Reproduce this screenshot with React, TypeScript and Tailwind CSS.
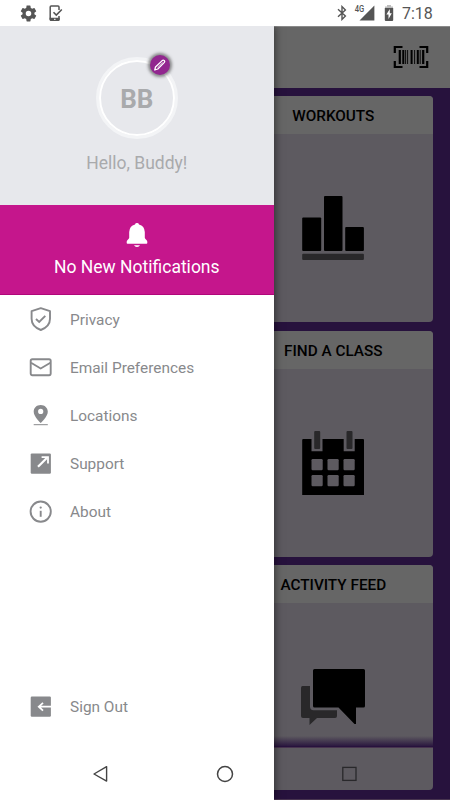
import type { ReactNode } from 'react'

interface MenuItemProps {
  icon: ReactNode
  label: string
}

interface TileProps {
  title: string
  children: ReactNode
}

function StatusBar() {
  return (
    <header className="z-20 flex h-[26px] w-full shrink-0 items-center bg-white pl-[19px] pr-[17px] text-[#555]">
      <svg className="h-[19px] w-[19px]" viewBox="0 0 24 24" fill="currentColor">
        <path d="M19.43 12.98c.04-.32.07-.64.07-.98s-.03-.66-.07-.98l2.11-1.65c.19-.15.24-.42.12-.64l-2-3.46c-.12-.22-.39-.3-.61-.22l-2.49 1c-.52-.4-1.08-.73-1.69-.98l-.38-2.65A.49.49 0 0 0 14 2h-4c-.25 0-.46.18-.49.42l-.38 2.65c-.61.25-1.17.59-1.69.98l-2.49-1c-.23-.09-.49 0-.61.22l-2 3.46c-.13.22-.07.49.12.64l2.11 1.65c-.04.32-.07.65-.07.98s.03.66.07.98l-2.11 1.65c-.19.15-.24.42-.12.64l2 3.46c.12.22.39.3.61.22l2.49-1c.52.4 1.08.73 1.69.98l.38 2.65c.03.24.24.42.49.42h4c.25 0 .46-.18.49-.42l.38-2.65c.61-.25 1.17-.59 1.69-.98l2.49 1c.23.09.49 0 .61-.22l2-3.46c.12-.22.07-.49-.12-.64zM12 15.5a3.5 3.5 0 1 1 0-7 3.5 3.5 0 0 1 0 7" />
      </svg>
      <svg className="ml-[10px] h-[18px] w-[16px]" viewBox="0 0 16 18" fill="none" stroke="currentColor">
        <path d="M11 6V3Q11 2 10 2H3.2Q2.2 2 2.2 3V15Q2.2 16 3.2 16H10Q11 16 11 15V12" strokeWidth="1.5" />
        <path d="M1.6 13.8H11.7V15.5Q11.7 17 10.4 17H3Q1.6 17 1.6 15.5Z" fill="currentColor" stroke="none" />
        <path d="M5.5 8.2L8.3 11L13.8 5.5" strokeWidth="1.6" />
        <path d="M6 15.3H7.6" stroke="#fff" />
      </svg>

      <div className="flex-1" />

      <svg className="h-[16px] w-[12px]" viewBox="0 0 12 16" fill="none" stroke="currentColor" strokeWidth="1.4">
        <path d="M2 4.2L9.4 11L6 14.4V1.6L9.4 5L2 11.8" />
      </svg>
      <svg className="ml-[6px] h-[18px] w-[22px]" viewBox="0 0 22 18" fill="currentColor">
        <path d="M20.4 1.5V16.4H5.5Z" />
        <text x="0.8" y="8" fontFamily="Roboto, sans-serif" fontSize="8.5" fontWeight="500" textLength="9.5" lengthAdjust="spacingAndGlyphs">
          4G
        </text>
      </svg>
      <svg className="ml-[8px] h-[16px] w-[10px]" viewBox="0 0 10 16">
        <path d="M3 0H7V1.5H9V6H1V1.5H3Z" fill="#bdbdbd" />
        <path d="M.8 3H9.2V15Q9.2 16 8.2 16H1.8Q.8 16 .8 15Z" fill="#555" />
        <path d="M5.8 4L2.4 9.4H4.5V14L7.8 8.2H5.8Z" fill="#fff" />
      </svg>
      <span className="ml-[8px] mt-[2px] w-[31px] whitespace-nowrap text-[16px]">7:18</span>
    </header>
  )
}

function Profile() {
  return (
    <section className="flex h-[179px] flex-col items-center bg-[#e7e8ec] pt-[31px]">
      <div className="relative flex h-[82px] w-[82px] items-center justify-center rounded-full border-[3px] border-[#f3f4f6]">
        <div className="flex h-[76px] w-[76px] shrink-0 items-center justify-center rounded-full border-2 border-white pt-[2px] text-[26px] font-bold text-[#a9aaac]">
          BB
        </div>
        {/* Edit badge */}
        <div className="absolute -top-[5px] right-[5px] flex h-5 w-5 items-center justify-center rounded-full bg-[#92278f] shadow-[0_0_3px_2px_rgba(60,60,60,0.55)]">
          <svg className="h-[14px] w-[14px]" viewBox="0 0 14 14" fill="none" stroke="#fff" strokeWidth="1.3" strokeLinejoin="round">
            <path d="M1.8 12L2.5 9L9.2 2.6Q10.2 1.8 11.2 2.5Q12.2 3.4 11.4 4.4L4.8 11Z" />
            <path d="M4.5 9.3L9.6 4.4" strokeWidth=".6" />
          </svg>
        </div>
      </div>
      <p className="mt-[12px] text-[17.5px] leading-6 text-[#a9aaac]">Hello, Buddy!</p>
    </section>
  )
}

function Notifications() {
  return (
    <section className="flex h-[90px] flex-col items-center border-b border-[#b0067a] bg-[#c5168c] pt-[18px] text-white">
      <svg className="h-[25px] w-[22px]" viewBox="0 0 22 25" fill="currentColor">
        <path d="M11 0Q12.7 0 13 1.4Q18.5 2.8 18.8 9V14.8Q19 16 20.2 16.8Q21.3 17.6 21.3 18.8V20Q21.3 20.8 20.5 20.8H1.5Q.7 20.8.7 20V18.8Q.7 17.6 1.8 16.8Q3 16 3.2 14.8V9Q3.5 2.8 9 1.4Q9.3 0 11 0Z" />
        <path d="M8 22.2H14Q13.2 24 11 24Q8.8 24 8 22.2Z" />
      </svg>
      <p className="mt-[7px] text-[17.5px] leading-6">No New Notifications</p>
    </section>
  )
}

function MenuItem({ icon, label }: MenuItemProps) {
  return (
    <li className="flex h-12 items-center gap-[17px] pl-[29px] text-[15.4px] text-[#88898c]">
      <svg className="h-6 w-6 shrink-0 overflow-visible" viewBox="0 0 24 24" fill="none" stroke="currentColor" strokeWidth="1.9">
        {icon}
      </svg>
      <span className="pt-[2px]">{label}</span>
    </li>
  )
}

const menu: MenuItemProps[] = [
  {
    label: 'Privacy',
    icon: (
      <>
        <path d="M11.8 .2L21 3.2V10.8Q21 18.6 11.8 22Q2.6 18.6 2.6 10.8V3.2Z" strokeLinejoin="round" />
        <path d="M7 11L10.2 14L16.3 7.8" />
      </>
    ),
  },
  {
    label: 'Email Preferences',
    icon: (
      <>
        <rect x="1.7" y="3.2" width="20" height="16" rx="1.6" />
        <path d="M2 6.8L11.7 12.5L21.4 6.8" />
      </>
    ),
  },
  {
    label: 'Locations',
    icon: (
      <>
        <path
          d="M11.7 1C7.6 1 4.7 3.9 4.7 7.8C4.7 12.8 11.7 19 11.7 19S18.8 12.8 18.8 7.8C18.8 3.9 15.8 1 11.7 1ZM11.7 10A2.6 2.6 0 1 1 11.7 4.8A2.6 2.6 0 0 1 11.7 10Z"
          fill="currentColor"
          stroke="none"
        />
        <path d="M4.7 20.7H18.8" strokeWidth="1" />
      </>
    ),
  },
  {
    label: 'Support',
    icon: (
      <>
        <rect x="1.7" y="1.4" width="20.2" height="20.4" rx="1.2" fill="currentColor" stroke="none" />
        <path d="M9 14.8L17.8 6" stroke="#fff" strokeWidth="2.2" />
        <path d="M12.6 5.2H19V11.4" stroke="#fff" strokeWidth="1.8" />
      </>
    ),
  },
  {
    label: 'About',
    icon: (
      <>
        <circle cx="11.7" cy="11.6" r="10.1" />
        <circle cx="11.7" cy="7.6" r="1.15" fill="currentColor" stroke="none" />
        <path d="M11.7 10.8V16.8" strokeWidth="1.9" />
      </>
    ),
  },
]

const signOut: MenuItemProps = {
  label: 'Sign Out',
  icon: (
    <>
      <rect x="1.7" y="1.6" width="20.2" height="20.2" rx="1.2" fill="currentColor" stroke="none" />
      <path d="M22 11.7H9.6M14 7.8L9.8 11.7L14 15.6" stroke="#fff" strokeWidth="1.8" />
    </>
  ),
}

function Drawer() {
  return (
    <aside className="z-10 flex w-[273.6px] shrink-0 flex-col bg-white shadow-[1px_0_8px_rgba(0,0,0,0.5)]">
      <Profile />
      <Notifications />
      <ul className="mt-px">
        {menu.map((item) => (
          <MenuItem key={item.label} {...item} />
        ))}
      </ul>
      <ul className="mt-auto pb-[69px]">
        <MenuItem {...signOut} />
      </ul>
    </aside>
  )
}

function Tile({ title, children }: TileProps) {
  return (
    <article className="h-[226px] shrink-0 overflow-hidden rounded-r-[4px] bg-[#5d5a60]">
      <h2 className="flex h-[38px] items-center justify-center bg-[#666] pr-10 text-[15.3px] font-medium text-black">
        <span className="mt-[3px] whitespace-nowrap">{title}</span>
      </h2>
      <svg className="ml-[26.4px] mt-[58px] h-[70px] w-[66px]" viewBox="0 0 66 70">
        {children}
      </svg>
    </article>
  )
}

function Dashboard() {
  return (
    <main className="flex min-w-0 flex-1 flex-col bg-[#27123d]">
      <div className="flex h-[62px] shrink-0 items-center justify-end border-t border-[#8a8a8a] bg-[#666] pr-[21px]">
        <svg className="mb-[2px] h-[26px] w-[36px]" viewBox="0 0 36 26" fill="none" stroke="#000">
          <path d="M1.8 9V3H9.5M26.5 3H34.2V9M34.2 17V23H26.5M9.5 23H1.8V17" strokeWidth="2.2" />
          <path d="M6.8 6V20M30.2 6V20" strokeWidth="2.2" />
          <path d="M10.3 6V20M18.6 6V20M24.8 6V20" strokeWidth="2" />
          <path d="M12.6 6V20M14.6 6V20M21.6 6V20M27.2 6V20" strokeWidth=".9" />
        </svg>
      </div>

      <div className="flex h-[658px] shrink-0 flex-col gap-[8.5px] overflow-hidden pr-[17px] pt-[8px]">
        <Tile title="WORKOUTS">
          <rect x="2.2" y="25.5" width="19" height="33.5" rx="1" />
          <rect x="24" y="4" width="18.5" height="55" rx="1" />
          <rect x="45.2" y="35" width="18.7" height="24" rx="1" />
          <rect x="2.2" y="61.7" width="61.7" height="6.3" rx="1" fill="#29282a" />
        </Tile>
        <Tile title="FIND A CLASS">
          <path d="M3.2 12H11.5V24.3H22.5V12H43.7V24.3H54.7V12H63Q64 12 64 13V68H2.2V13Q2.2 12 3.2 12Z" />
          <rect x="14.2" y="4" width="6" height="18" rx="1" fill="#29282a" />
          <rect x="46.5" y="4" width="6" height="18" rx="1" fill="#29282a" />
          <g fill="#5d5a60">
            <rect x="11.5" y="32" width="11.2" height="11.2" rx="1.2" />
            <rect x="27.5" y="32" width="11.2" height="11.2" rx="1.2" />
            <rect x="43.5" y="32" width="11.2" height="11.2" rx="1.2" />
            <rect x="11.5" y="48" width="11.2" height="11.2" rx="1.2" />
            <rect x="27.5" y="48" width="11.2" height="11.2" rx="1.2" />
            <rect x="43.5" y="48" width="11.2" height="11.2" rx="1.2" />
          </g>
        </Tile>
        <Tile title="ACTIVITY FEED">
          <path d="M2.5 25H10V45.5Q10 49.2 13.5 49.2H37V55Q37 57 35 57H17L9.5 64V57H3Q1 57 1 55V27Q1 25 2.5 25Z" fill="#29282a" />
          <path d="M14.5 8H63.5Q65 8 65 9.5V45Q65 46.5 63.5 46.5H56V63H54.5L38.5 46.5H14.5Q13 46.5 13 45V9.5Q13 8 14.5 8Z" />
        </Tile>
      </div>

      <div className="relative mt-px mr-[17px] h-[43px] shrink-0 rounded-br-[4px] border-t border-[#47344f] bg-[#5d5a60]">
        <div className="absolute -top-[12px] left-0 h-[11px] w-full bg-gradient-to-b from-transparent to-[#27123d]" />
      </div>
      <div className="mt-auto h-px shrink-0 bg-[#47344f]" />
    </main>
  )
}

function NavigationBar() {
  return (
    <nav className="absolute bottom-0 left-0 z-20 flex h-[52px] w-full items-center justify-between px-[92px]">
      <svg className="h-[18px] w-[18px]" viewBox="0 0 18 18" fill="none" stroke="#444" strokeWidth="1.4">
        <path d="M14.6 1.7V16.1L2 9Z" strokeLinejoin="round" />
      </svg>
      <svg className="h-[18px] w-[18px]" viewBox="0 0 18 18" fill="none" stroke="#444" strokeWidth="1.5">
        <circle cx="9" cy="9" r="7.5" />
      </svg>
      <svg className="h-[18px] w-[18px]" viewBox="0 0 18 18" fill="none" stroke="#29282b" strokeWidth="1.3">
        <rect x="2.8" y="2.4" width="13.2" height="13" />
      </svg>
    </nav>
  )
}

export default function App() {
  return (
    <div className="relative flex h-[800px] w-[450px] flex-col overflow-hidden bg-white font-['Roboto',sans-serif]">
      <StatusBar />
      <div className="flex min-h-0 flex-1">
        <Drawer />
        <Dashboard />
      </div>
      <NavigationBar />
    </div>
  )
}
